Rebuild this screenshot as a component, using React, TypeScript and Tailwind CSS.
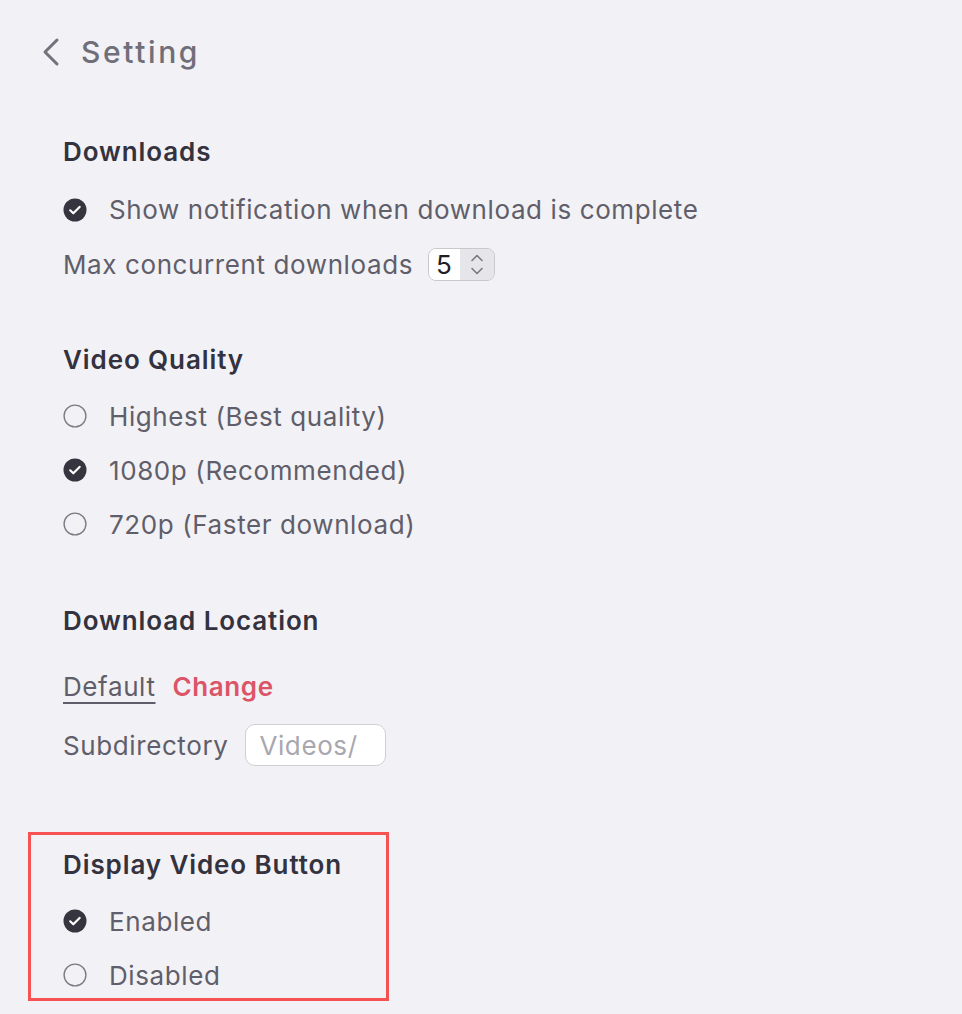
import React from 'react';

const Checked = () => (
  <svg width="24" height="24" viewBox="0 0 24 24" className="shrink-0">
    <circle cx="12" cy="12" r="11.5" fill="#35343f" />
    <path d="M7.2 12.3l3.1 3 6.3-6.4" fill="none" stroke="#fff" strokeWidth="2.2" strokeLinecap="round" strokeLinejoin="round" />
  </svg>
);

const Unchecked = () => (
  <svg width="24" height="24" viewBox="0 0 24 24" className="shrink-0">
    <circle cx="12" cy="12" r="10.9" fill="none" stroke="#7d7c86" strokeWidth="1.4" />
  </svg>
);

const Option = ({ checked, label, className = 'h-[54px]' }: { checked: boolean; label: string; className?: string }) => (
  <div className={`flex items-center gap-[22px] ${className}`}>
    {checked ? <Checked /> : <Unchecked />}
    <span>{label}</span>
  </div>
);

const Heading = ({ children, className = '' }: { children: React.ReactNode; className?: string }) => (
  <div className={`h-[32px] flex items-center text-[26px] font-semibold tracking-[0.9px] text-[#33323e] ${className}`}>{children}</div>
);

export default function App() {
  return (
    <div
      className="min-h-screen w-full bg-[#f2f1f5] pt-[32px] text-[26px] tracking-[0.6px] text-[#5f5e6a]"
      style={{ fontFamily: 'Inter, "Noto Sans", sans-serif' }}
    >
      {/* header */}
      <div className="flex items-center h-[40px] pl-[40px]">
        <svg width="22" height="30" viewBox="0 0 22 30" className="shrink-0">
          <path d="M17 3L5 15l12 12" fill="none" stroke="#72717c" strokeWidth="3" strokeLinecap="round" strokeLinejoin="round" />
        </svg>
        <span className="ml-[19px] text-[30px] font-medium tracking-[2.6px] text-[#6f6e79]">Setting</span>
      </div>

      <div className="pl-[63px]">
        {/* Downloads */}
        <Heading className="mt-[63px] mb-[15px]">Downloads</Heading>
        <div className="h-[55px] flex items-center gap-[22px]">
          <Checked />
          <span>Show notification when download is complete</span>
        </div>
        <div className="h-[55px] flex items-center">
          <span>Max concurrent downloads</span>
          <div className="ml-[15px] flex h-[33px] w-[67px] rounded-[8px] border border-[#c9c8cd] overflow-hidden">
            <div className="flex-1 bg-white flex items-center pl-[7px] text-[#1f1e26]">5</div>
            <div className="w-[34px] bg-[#e6e5e9] flex flex-col items-center justify-center gap-[5px]">
              <svg width="14" height="8" viewBox="0 0 14 8">
                <path d="M2 6.5L7 1.5l5 5" fill="none" stroke="#7a7984" strokeWidth="1.6" strokeLinecap="round" strokeLinejoin="round" />
              </svg>
              <svg width="14" height="8" viewBox="0 0 14 8">
                <path d="M2 1.5L7 6.5l5-5" fill="none" stroke="#7a7984" strokeWidth="1.6" strokeLinecap="round" strokeLinejoin="round" />
              </svg>
            </div>
          </div>
        </div>

        {/* Video Quality */}
        <Heading className="mt-[51px] mb-[14px]">Video Quality</Heading>
        <Option checked={false} label="Highest (Best quality)" />
        <Option checked label="1080p (Recommended)" />
        <Option checked={false} label="720p (Faster download)" />

        {/* Download Location */}
        <Heading className="mt-[53px] mb-[23px]">Download Location</Heading>
        <div className="h-[54px] flex items-center gap-[17px]">
          <span className="underline decoration-[1.5px] underline-offset-[6px]">Default</span>
          <span className="font-semibold text-[#dc5467]">Change</span>
        </div>
        <div className="h-[64px] flex items-center">
          <span>Subdirectory</span>
          <div className="ml-[17px] h-[42px] w-[141px] rounded-[10px] border-[1.5px] border-[#d0cfd4] bg-white flex items-center pl-[13px] text-[#a8a7af]">
            Videos/
          </div>
        </div>
      </div>

      {/* Display Video Button */}
      <div className="ml-[28px] mt-[55px] w-[361px] border-[3px] border-[#f55353] pl-[32px] pt-[13px]">
        <Heading className="mb-[14px]">Display Video Button</Heading>
        <Option checked label="Enabled" />
        <Option checked={false} label="Disabled" className="h-[50px] pt-[4px]" />
      </div>
    </div>
  );
}
